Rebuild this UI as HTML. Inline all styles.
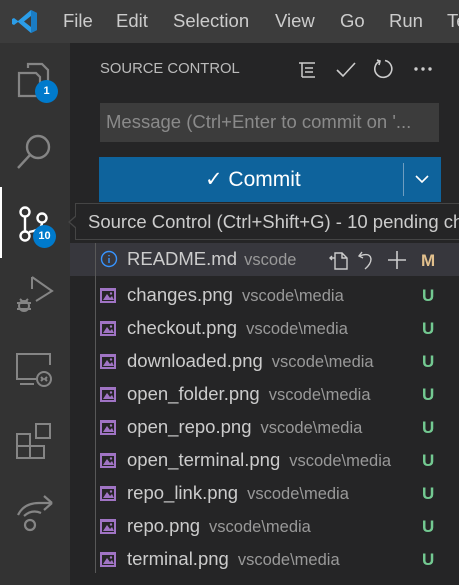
<!DOCTYPE html>
<html><head><style>
*{margin:0;padding:0;box-sizing:border-box}
body{width:459px;height:585px;background:#252526;font-family:"Liberation Sans",sans-serif;position:relative;overflow:hidden;color:#ccc}
.title{position:absolute;left:0;top:0;width:459px;height:43px;background:#3c3c3c;overflow:hidden}
.menu{position:absolute;top:10px;font-size:18.5px;color:#ccc}
.act{position:absolute;left:0;top:43px;width:70px;height:542px;background:#333}
.badge{position:absolute;width:23px;height:23px;border-radius:50%;background:#007acc;color:#fff;font-size:11px;font-weight:bold;text-align:center;line-height:23px}
.row{position:absolute;left:70px;width:389px;height:33px}
.row .ic{position:absolute;left:30px;top:9px;width:16px;height:15px}
.row .n{position:absolute;left:57px;top:5px;font-size:18.5px;color:#ccc;white-space:nowrap}
.row .n span{font-size:16.5px;color:#999;margin-left:9px}
.row .s{position:absolute;left:352px;top:7px;font-size:17px;font-weight:bold;color:#73c991}
</style></head><body>
<div class="title">
<svg style="position:absolute;left:12px;top:9px" width="26" height="25" viewBox="0 0 26 25"><path d="M19 1 L25 4 V21 L19 24 L6 13 L2 16 L0 15 V10 L2 9 L6 12 Z M19 7 L12 12.5 L19 18 Z" fill="#2b9de8"/><path d="M19 1 L25 4 V21 L19 24Z" fill="#1a7cc4"/></svg>
<div class="menu" style="left:63px">File</div>
<div class="menu" style="left:116px">Edit</div>
<div class="menu" style="left:173px">Selection</div>
<div class="menu" style="left:275px">View</div>
<div class="menu" style="left:340px">Go</div>
<div class="menu" style="left:389px">Run</div>
<div class="menu" style="left:447px;width:12px;overflow:hidden">Te</div>
</div>
<div class="act">
<svg style="position:absolute;left:16px;top:18px" width="34" height="38" viewBox="0 0 34 38" fill="none" stroke="#858585" stroke-width="2.2"><path d="M12 7 V3 H26 L32 9 V27 H24"/><path d="M3 12 H20 L24 16 V35 H3 Z"/></svg>
<div class="badge" style="left:35px;top:37px">1</div>
<svg style="position:absolute;left:16px;top:89px" width="36" height="40" viewBox="0 0 36 40" fill="none" stroke="#858585" stroke-width="2.4"><circle cx="22" cy="15" r="11"/><path d="M14 23 L2 36"/></svg>
<div style="position:absolute;left:0;top:144px;width:2px;height:71px;background:#fff"></div>
<svg style="position:absolute;left:16px;top:161px" width="34" height="42" viewBox="0 0 34 42" fill="none" stroke="#fff" stroke-width="2.4"><circle cx="9" cy="8" r="4.5"/><circle cx="26" cy="14" r="4.5"/><circle cx="9" cy="32" r="4.5"/><path d="M9 12.5 V27.5 M26 18.5 Q26 26 13 28"/></svg>
<div class="badge" style="left:33px;top:182px">10</div>
<svg style="position:absolute;left:14px;top:230px" width="40" height="40" viewBox="0 0 40 40" fill="none" stroke="#858585" stroke-width="2"><path d="M18 4 L38 18 L22 28"/><path d="M18 4 V16"/><circle cx="10" cy="33" r="5"/><path d="M3 30 H17 M3 36 H17 M6 26 L9 29 M14 26 L11 29"/></svg>
<svg style="position:absolute;left:14px;top:308px" width="40" height="38" viewBox="0 0 40 38" fill="none" stroke="#858585" stroke-width="2"><path d="M22 28 H3 V3 H36 V14"/><path d="M6 33 H20"/><circle cx="30" cy="28" r="7"/><path d="M27 26 L29 28 L27 30 M33 26 L31 28 L33 30"/></svg>
<svg style="position:absolute;left:14px;top:378px" width="40" height="40" viewBox="0 0 40 40" fill="none" stroke="#858585" stroke-width="2"><path d="M3 13 H16 V37 H3 Z M3 25 H30 V37 H16"/><rect x="22" y="3" width="14" height="14"/></svg>
<svg style="position:absolute;left:14px;top:450px" width="40" height="40" viewBox="0 0 40 40" fill="none" stroke="#858585" stroke-width="2.2"><path d="M38 10 L30 3 M38 10 L30 17 M38 10 H25 Q10 10 4 22"/><path d="M10 23 Q18 16 27 20"/><circle cx="16" cy="32" r="5"/></svg>
</div>
<div style="position:absolute;left:100px;top:61px;font-size:14.8px;color:#bbb">SOURCE CONTROL</div>
<svg style="position:absolute;left:297px;top:60px" width="20" height="20" viewBox="0 0 20 20" fill="none" stroke="#ccc" stroke-width="1.5"><path d="M2 3 H18 M5 3 V17 M8 8 H16 M8 12 H16 M5 17 H18"/></svg>
<svg style="position:absolute;left:335px;top:60px" width="22" height="20" viewBox="0 0 22 20" fill="none" stroke="#ccc" stroke-width="1.6"><path d="M2 10 L8 16 L20 3"/></svg>
<svg style="position:absolute;left:374px;top:58px" width="22" height="22" viewBox="0 0 22 22" fill="none" stroke="#ccc" stroke-width="1.6"><path d="M6 3 A8.5 8.5 0 1 0 11 2.5"/><path d="M3 2 L6 3 L5 7"/></svg>
<svg style="position:absolute;left:413px;top:66px" width="20" height="6" viewBox="0 0 20 6" fill="#ccc"><circle cx="3" cy="3" r="1.7"/><circle cx="10" cy="3" r="1.7"/><circle cx="17" cy="3" r="1.7"/></svg>
<div style="position:absolute;left:100px;top:103px;width:339px;height:39px;background:#3c3c3c;font-size:18.5px;color:#8a8a8a;padding:8px 6px;white-space:nowrap;overflow:hidden">Message (Ctrl+Enter to commit on '...</div>
<div style="position:absolute;left:99px;top:157px;width:342px;height:45px;background:#0e639c"></div>
<div style="position:absolute;left:205px;top:167px;font-size:21px;color:#fff">✓ Commit</div>
<div style="position:absolute;left:403px;top:163px;width:1px;height:33px;background:#6e9dc0"></div>
<svg style="position:absolute;left:414px;top:173px" width="16" height="12" viewBox="0 0 16 12" fill="none" stroke="#fff" stroke-width="1.6"><path d="M2 3 L8 9 L14 3"/></svg>
<div style="position:absolute;left:70px;top:243px;width:389px;height:33px;background:#37373d"></div>
<div style="position:absolute;left:95px;top:243px;width:1px;height:330px;background:#585858"></div>
<svg style="position:absolute;left:100px;top:250px" width="18" height="18" viewBox="0 0 18 18" fill="none" stroke="#3794ff" stroke-width="1.4"><circle cx="9" cy="9" r="7.5"/><path d="M9 8 V13 M9 5 V6.2"/></svg>
<div style="position:absolute;left:127px;top:248px;font-size:18.5px;color:#ccc;white-space:nowrap">README.md <span style="font-size:16.5px;color:#999;margin-left:2px">vscode</span></div>
<svg style="position:absolute;left:327px;top:249px" width="22" height="22" viewBox="0 0 22 22" fill="none" stroke="#ccc" stroke-width="1.4"><path d="M8 4 H15 L20 9 V20 H8 Z M15 4 V9 H20"/><path d="M3 9 H8 M5 7 L3 9 L5 11"/></svg>
<svg style="position:absolute;left:358px;top:249px" width="18" height="22" viewBox="0 0 18 22" fill="none" stroke="#ccc" stroke-width="1.4"><path d="M4 3 L1 7 L5 9"/><path d="M1.5 7 Q12 3 13 10 Q13 15 7 20"/></svg>
<svg style="position:absolute;left:386px;top:249px" width="22" height="22" viewBox="0 0 22 22" fill="none" stroke="#ccc" stroke-width="1.6"><path d="M11 2 V20 M2 11 H20"/></svg>
<div style="position:absolute;left:421px;top:251px;font-size:17px;font-weight:bold;color:#e2c08d">M</div>
<div class="row" style="top:279px"><svg class="ic" viewBox="0 0 16 15"><path d="M0 0 H16 V15 H0Z" fill="#a074c4"/><path d="M2 3 H14 V13 H2Z" fill="#252526"/><path d="M3 12 L7 6 L10 10 L12 8 L14 12Z" fill="#a074c4"/><circle cx="11" cy="5.5" r="1.2" fill="#a074c4"/></svg><div class="n">changes.png<span>vscode\media</span></div><div class="s">U</div></div>
<div class="row" style="top:312px"><svg class="ic" viewBox="0 0 16 15"><path d="M0 0 H16 V15 H0Z" fill="#a074c4"/><path d="M2 3 H14 V13 H2Z" fill="#252526"/><path d="M3 12 L7 6 L10 10 L12 8 L14 12Z" fill="#a074c4"/><circle cx="11" cy="5.5" r="1.2" fill="#a074c4"/></svg><div class="n">checkout.png<span>vscode\media</span></div><div class="s">U</div></div>
<div class="row" style="top:345px"><svg class="ic" viewBox="0 0 16 15"><path d="M0 0 H16 V15 H0Z" fill="#a074c4"/><path d="M2 3 H14 V13 H2Z" fill="#252526"/><path d="M3 12 L7 6 L10 10 L12 8 L14 12Z" fill="#a074c4"/><circle cx="11" cy="5.5" r="1.2" fill="#a074c4"/></svg><div class="n">downloaded.png<span>vscode\media</span></div><div class="s">U</div></div>
<div class="row" style="top:378px"><svg class="ic" viewBox="0 0 16 15"><path d="M0 0 H16 V15 H0Z" fill="#a074c4"/><path d="M2 3 H14 V13 H2Z" fill="#252526"/><path d="M3 12 L7 6 L10 10 L12 8 L14 12Z" fill="#a074c4"/><circle cx="11" cy="5.5" r="1.2" fill="#a074c4"/></svg><div class="n">open_folder.png<span>vscode\media</span></div><div class="s">U</div></div>
<div class="row" style="top:411px"><svg class="ic" viewBox="0 0 16 15"><path d="M0 0 H16 V15 H0Z" fill="#a074c4"/><path d="M2 3 H14 V13 H2Z" fill="#252526"/><path d="M3 12 L7 6 L10 10 L12 8 L14 12Z" fill="#a074c4"/><circle cx="11" cy="5.5" r="1.2" fill="#a074c4"/></svg><div class="n">open_repo.png<span>vscode\media</span></div><div class="s">U</div></div>
<div class="row" style="top:444px"><svg class="ic" viewBox="0 0 16 15"><path d="M0 0 H16 V15 H0Z" fill="#a074c4"/><path d="M2 3 H14 V13 H2Z" fill="#252526"/><path d="M3 12 L7 6 L10 10 L12 8 L14 12Z" fill="#a074c4"/><circle cx="11" cy="5.5" r="1.2" fill="#a074c4"/></svg><div class="n">open_terminal.png<span>vscode\media</span></div><div class="s">U</div></div>
<div class="row" style="top:477px"><svg class="ic" viewBox="0 0 16 15"><path d="M0 0 H16 V15 H0Z" fill="#a074c4"/><path d="M2 3 H14 V13 H2Z" fill="#252526"/><path d="M3 12 L7 6 L10 10 L12 8 L14 12Z" fill="#a074c4"/><circle cx="11" cy="5.5" r="1.2" fill="#a074c4"/></svg><div class="n">repo_link.png<span>vscode\media</span></div><div class="s">U</div></div>
<div class="row" style="top:510px"><svg class="ic" viewBox="0 0 16 15"><path d="M0 0 H16 V15 H0Z" fill="#a074c4"/><path d="M2 3 H14 V13 H2Z" fill="#252526"/><path d="M3 12 L7 6 L10 10 L12 8 L14 12Z" fill="#a074c4"/><circle cx="11" cy="5.5" r="1.2" fill="#a074c4"/></svg><div class="n">repo.png<span>vscode\media</span></div><div class="s">U</div></div>
<div class="row" style="top:543px"><svg class="ic" viewBox="0 0 16 15"><path d="M0 0 H16 V15 H0Z" fill="#a074c4"/><path d="M2 3 H14 V13 H2Z" fill="#252526"/><path d="M3 12 L7 6 L10 10 L12 8 L14 12Z" fill="#a074c4"/><circle cx="11" cy="5.5" r="1.2" fill="#a074c4"/></svg><div class="n">terminal.png<span>vscode\media</span></div><div class="s">U</div></div>
<div style="position:absolute;left:75px;top:203px;width:384px;height:37px;background:#252526;border:1px solid #454545;border-right:none;font-size:18.5px;color:#ccc;padding:7px 12px;white-space:nowrap;overflow:hidden">Source Control (Ctrl+Shift+G) - 10 pending changes</div>
<div style="position:absolute;left:68px;top:215px;width:0;height:0;border-top:7px solid transparent;border-bottom:7px solid transparent;border-right:8px solid #454545"></div>
<div style="position:absolute;left:70px;top:216px;width:0;height:0;border-top:6px solid transparent;border-bottom:6px solid transparent;border-right:7px solid #252526"></div>
</body></html>
